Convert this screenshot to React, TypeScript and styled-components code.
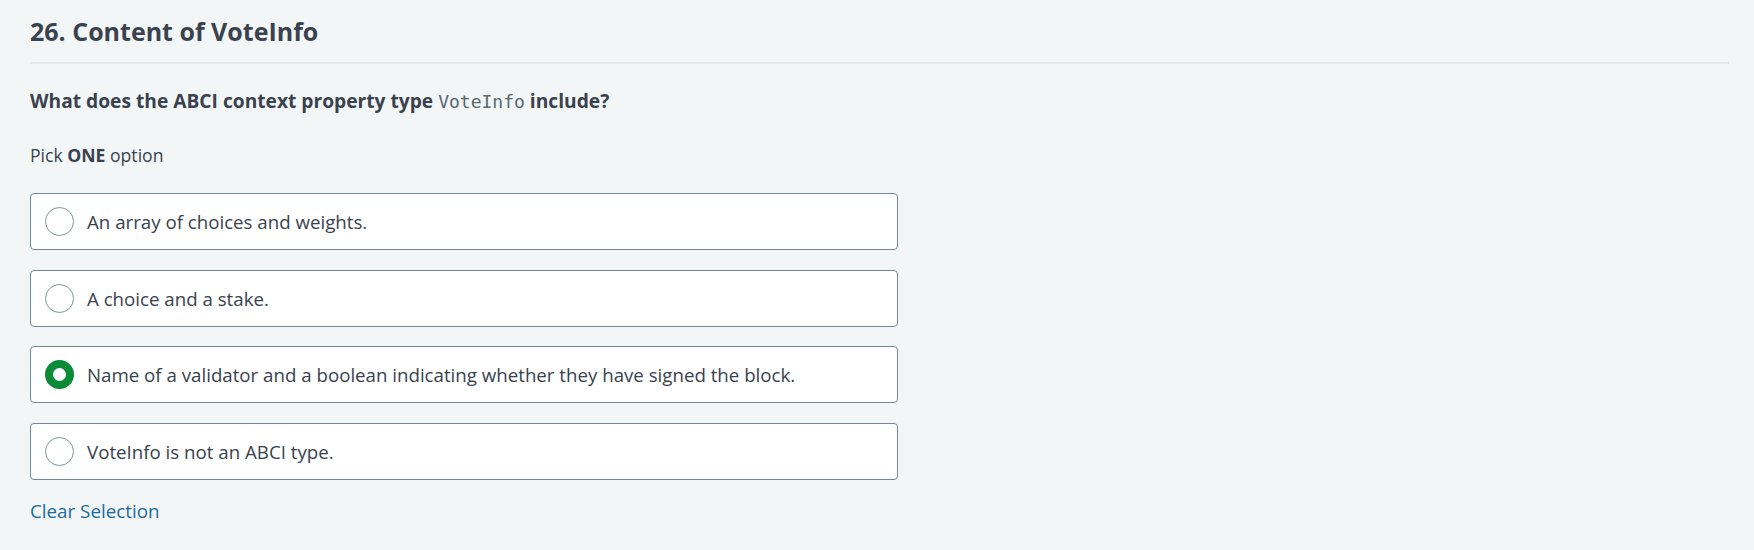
import React, { useState } from "react";
import styled, { createGlobalStyle } from "styled-components";

const Global = createGlobalStyle`
  html, body { margin: 0; padding: 0; background: #f3f6f7; }
  body { font-family: "Open Sans", "Noto Sans", sans-serif; color: #39424e; }
  * { box-sizing: border-box; }
`;

const Page = styled.div`
  padding: 13px 25px 30px 30px;
  min-height: 550px;
`;

const Title = styled.h2`
  margin: 0;
  font-size: 25px;
  line-height: 36px;
  font-weight: 700;
  color: #39424e;
  padding-bottom: 13px;
  border-bottom: 2px solid #e3e9eb;
`;

const Question = styled.p`
  margin: 23px 0 0;
  font-size: 19.2px;
  line-height: 28px;
  font-weight: 700;
  color: #39424e;
`;

const Code = styled.code`
  font-family: "DejaVu Sans Mono", "Liberation Mono", monospace;
  font-weight: 400;
  font-size: 18px;
  color: #576871;
`;

const Hint = styled.p`
  margin: 26px 0 0;
  font-size: 17.6px;
  line-height: 26px;
  color: #39424e;
`;

const Options = styled.div`
  margin-top: 25px;
  width: 868px;
  display: flex;
  flex-direction: column;
  gap: 19.5px;
`;

const Option = styled.label`
  display: flex;
  align-items: center;
  gap: 13px;
  height: 57px;
  padding: 0 14px;
  background: #ffffff;
  border: 1px solid #6f8b90;
  border-radius: 4px;
  cursor: pointer;
  font-size: 18.7px;
  color: #39424e;
`;

const Radio = styled.span<{ $checked: boolean }>`
  flex: none;
  width: 29px;
  height: 29px;
  border-radius: 50%;
  border: ${(p) => (p.$checked ? "8px solid #0b8a38" : "1px solid #7f9599")};
  background: #ffffff;
`;

const Clear = styled.a`
  display: inline-block;
  margin-top: 18px;
  font-size: 18.8px;
  line-height: 26px;
  color: #1d6a9c;
  text-decoration: none;
  cursor: pointer;
`;

const choices = [
  "An array of choices and weights.",
  "A choice and a stake.",
  "Name of a validator and a boolean indicating whether they have signed the block.",
  "VoteInfo is not an ABCI type.",
];

export default function App() {
  const [sel, setSel] = useState<number | null>(2);
  return (
    <Page>
      <Global />
      <Title>26. Content of VoteInfo</Title>
      <Question>
        What does the ABCI context property type <Code>VoteInfo</Code> include?
      </Question>
      <Hint>
        Pick <b>ONE</b> option
      </Hint>
      <Options>
        {choices.map((c, i) => (
          <Option key={i} onClick={() => setSel(i)}>
            <Radio $checked={sel === i} />
            {c}
          </Option>
        ))}
      </Options>
      <Clear onClick={() => setSel(null)}>Clear Selection</Clear>
    </Page>
  );
}
